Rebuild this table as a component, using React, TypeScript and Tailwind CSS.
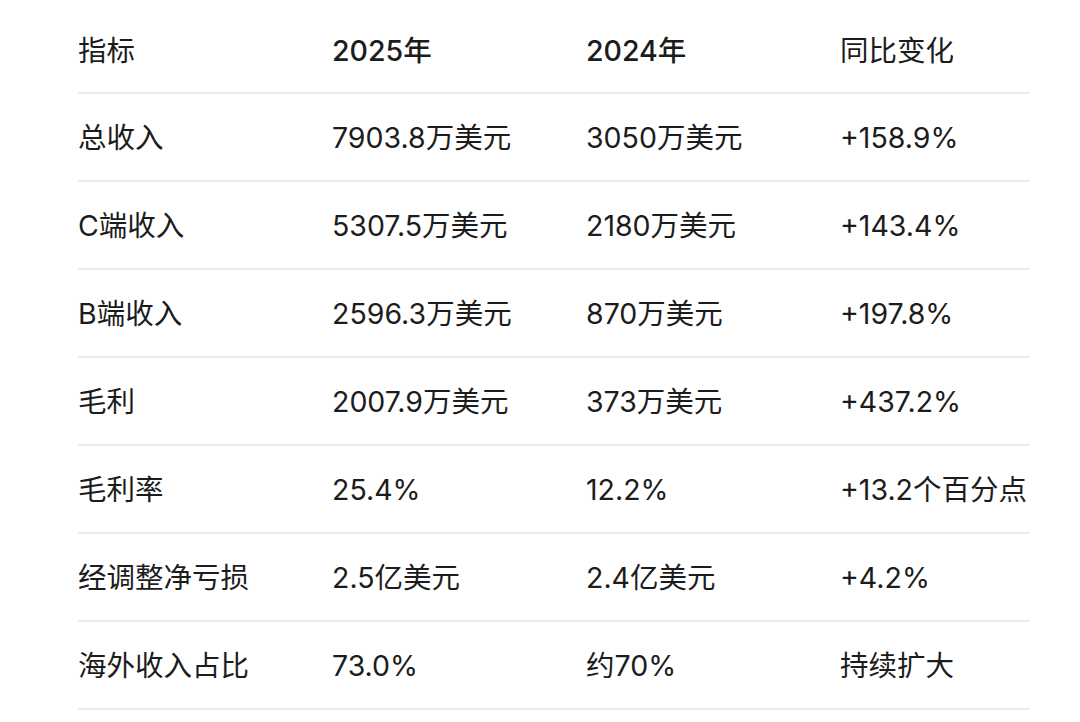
import React from "react";

const header = ["指标", "2025年", "2024年", "同比变化"];
const rows = [
  ["总收入", "7903.8万美元", "3050万美元", "+158.9%"],
  ["C端收入", "5307.5万美元", "2180万美元", "+143.4%"],
  ["B端收入", "2596.3万美元", "870万美元", "+197.8%"],
  ["毛利", "2007.9万美元", "373万美元", "+437.2%"],
  ["毛利率", "25.4%", "12.2%", "+13.2个百分点"],
  ["经调整净亏损", "2.5亿美元", "2.4亿美元", "+4.2%"],
  ["海外收入占比", "73.0%", "约70%", "持续扩大"],
];

export default function App() {
  return (
    <div
      className="w-[1080px] h-[722px] bg-white overflow-hidden pt-[6px] pl-[78px] text-[#1c1c1c] text-[28.5px]"
      style={{ fontFamily: "Inter, 'Noto Sans CJK SC', sans-serif" }}
    >
      <div className="w-[952px]">
        <div className="flex h-[88px] items-center border-b-2 border-[#ececec]">
          {header.map((h, i) => (
            <div
              key={i}
              className={`${i === 3 ? "w-[190px]" : "w-[254px]"} ${i === 1 || i === 2 ? "font-medium" : "font-normal"} whitespace-nowrap pt-[4px]`}
            >
              {h}
            </div>
          ))}
        </div>
        {rows.map((r, ri) => (
          <div key={ri} className="flex h-[88px] items-center border-b-2 border-[#ececec]">
            {r.map((c, i) => (
              <div key={i} className={`${i === 3 ? "w-[190px]" : "w-[254px]"} whitespace-nowrap pt-[2px]`}>
                {c}
              </div>
            ))}
          </div>
        ))}
      </div>
    </div>
  );
}
